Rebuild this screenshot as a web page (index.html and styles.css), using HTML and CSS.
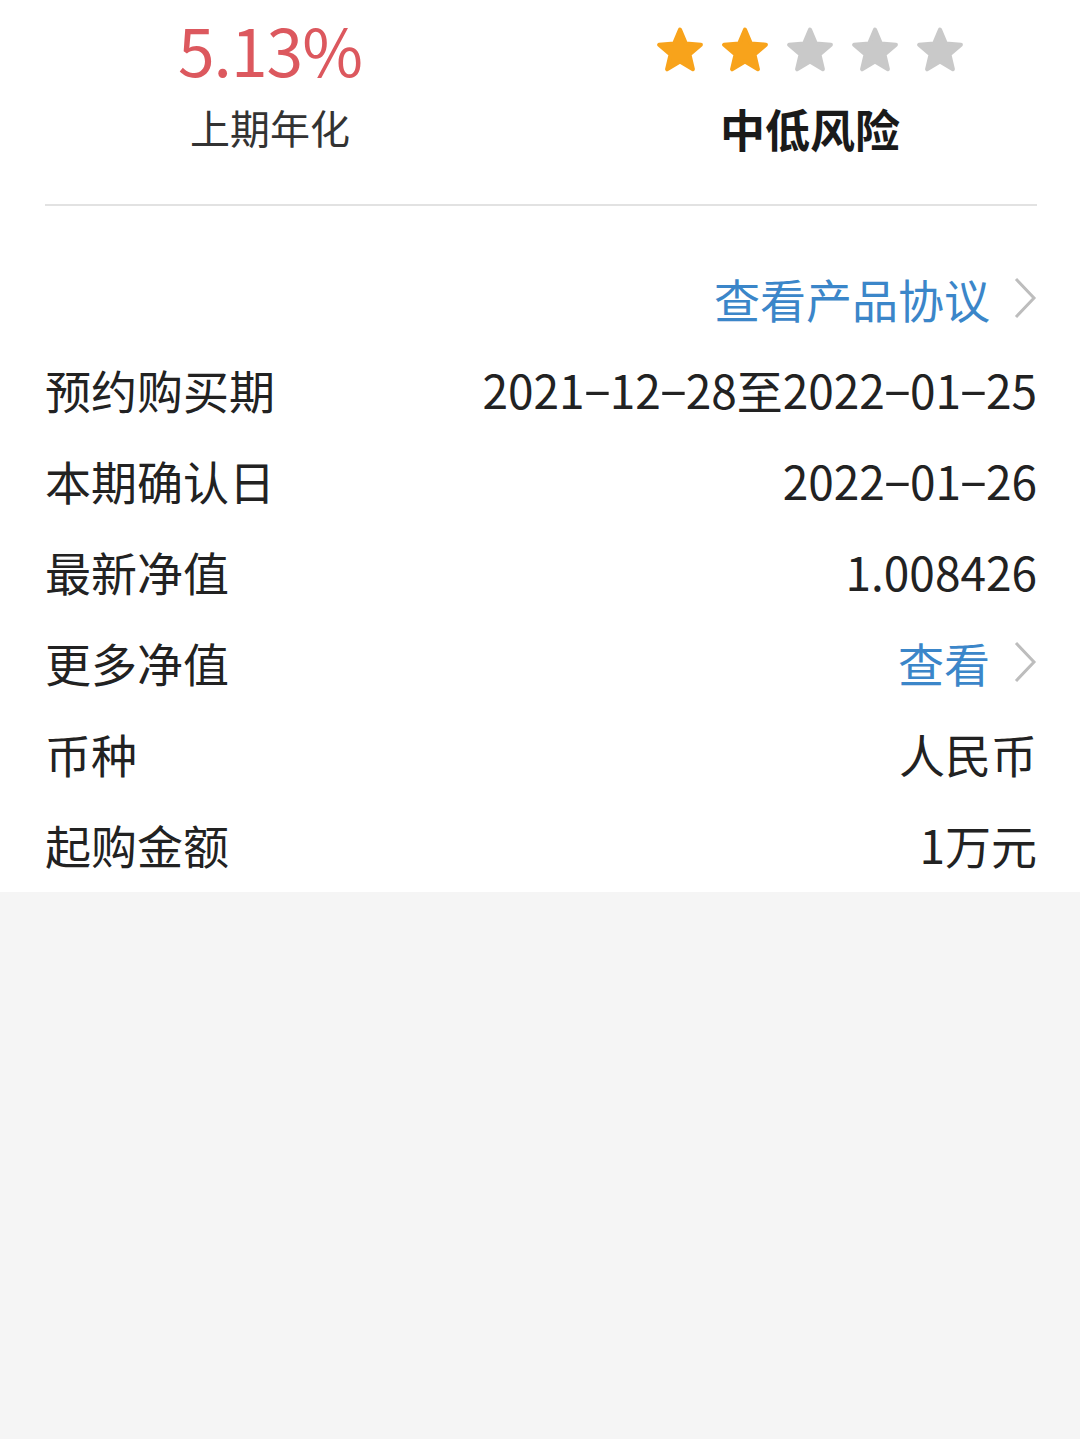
FILE: index.html
```html
<!DOCTYPE html>
<html lang="zh-CN">
<head>
  <meta charset="UTF-8" />
  <meta name="viewport" content="width=device-width, initial-scale=1.0"/>
  <title>产品详情</title>
  <link rel="stylesheet" href="styles.css">
</head>
<body>
  <div class="card">
    <div class="summary">
      <div class="summary-item rate">
        <div class="rate-value">5.13%</div>
        <div class="rate-label">上期年化</div>
      </div>
      <div class="summary-item risk">
        <div class="stars">
          <svg class="star on" viewBox="0 0 48 48"><polygon points="24,3.5 29.88,17.41 44.92,18.7 33.51,28.59 36.93,43.3 24,35.5 11.07,43.3 14.49,28.59 3.08,18.7 18.12,17.41"/></svg>
          <svg class="star on" viewBox="0 0 48 48"><polygon points="24,3.5 29.88,17.41 44.92,18.7 33.51,28.59 36.93,43.3 24,35.5 11.07,43.3 14.49,28.59 3.08,18.7 18.12,17.41"/></svg>
          <svg class="star" viewBox="0 0 48 48"><polygon points="24,3.5 29.88,17.41 44.92,18.7 33.51,28.59 36.93,43.3 24,35.5 11.07,43.3 14.49,28.59 3.08,18.7 18.12,17.41"/></svg>
          <svg class="star" viewBox="0 0 48 48"><polygon points="24,3.5 29.88,17.41 44.92,18.7 33.51,28.59 36.93,43.3 24,35.5 11.07,43.3 14.49,28.59 3.08,18.7 18.12,17.41"/></svg>
          <svg class="star" viewBox="0 0 48 48"><polygon points="24,3.5 29.88,17.41 44.92,18.7 33.51,28.59 36.93,43.3 24,35.5 11.07,43.3 14.49,28.59 3.08,18.7 18.12,17.41"/></svg>
        </div>
        <div class="risk-label">中低风险</div>
      </div>
    </div>

    <div class="details">
      <div class="divider"></div>

      <div class="row agreement">
        <a class="link" href="#">查看产品协议</a>
        <svg class="chevron" viewBox="0 0 24 42"><polyline points="3,2 21,21 3,40"/></svg>
      </div>

      <div class="row">
        <span class="row-label">预约购买期</span>
        <span class="row-value">2021<span class="dash">-</span>12<span class="dash">-</span>28至2022<span class="dash">-</span>01<span class="dash">-</span>25</span>
      </div>
      <div class="row">
        <span class="row-label">本期确认日</span>
        <span class="row-value">2022<span class="dash">-</span>01<span class="dash">-</span>26</span>
      </div>
      <div class="row">
        <span class="row-label">最新净值</span>
        <span class="row-value">1.008426</span>
      </div>
      <div class="row">
        <span class="row-label">更多净值</span>
        <span class="row-value">
          <a class="link" href="#">查看</a>
          <svg class="chevron" viewBox="0 0 24 42"><polyline points="3,2 21,21 3,40"/></svg>
        </span>
      </div>
      <div class="row">
        <span class="row-label">币种</span>
        <span class="row-value">人民币</span>
      </div>
      <div class="row">
        <span class="row-label">起购金额</span>
        <span class="row-value">1万元</span>
      </div>
    </div>
  </div>
</body>
</html>
```

FILE: styles.css
```css
* {
  margin: 0;
  padding: 0;
  box-sizing: border-box;
  font-family: "Noto Sans CJK SC", "Noto Sans", sans-serif;
}

body {
  min-height: 100vh;
  background: #f5f5f5;
  color: #222;
}

.card {
  background: #fff;
  padding-bottom: 3px;
}

.summary {
  display: flex;
  min-height: 204px;
}

.summary-item {
  flex: 1;
  display: flex;
  flex-direction: column;
  align-items: center;
}

.rate-value {
  font-size: 66px;
  line-height: 96px;
  color: #dc585e;
  letter-spacing: -1px;
}

.rate-label {
  margin-top: 7px;
  font-size: 40px;
  line-height: 48px;
  color: #333;
}

.risk {
  padding-top: 26px;
}

.stars {
  display: flex;
  gap: 17px;
}

.star {
  width: 48px;
  height: 48px;
  fill: #c9c9c9;
  stroke: #c9c9c9;
  stroke-width: 4;
  stroke-linejoin: round;
}

.star.on {
  fill: #f8a31b;
  stroke: #f8a31b;
}

.risk-label {
  margin-top: 29px;
  font-size: 45px;
  line-height: 52px;
  font-weight: 700;
  color: #1a1a1a;
}

.details {
  padding: 0 43px 0 45px;
}

.divider {
  height: 2px;
  background: #e2e2e2;
  margin-bottom: 46px;
}

.row {
  display: flex;
  justify-content: space-between;
  align-items: center;
  height: 91px;
  font-size: 46px;
}

.agreement {
  justify-content: flex-end;
}

.row-value {
  display: flex;
  align-items: center;
}

/* the app font draws a long dash between date parts */
.dash {
  display: inline-block;
  width: 25px;
  text-align: center;
  transform: translateY(-3px) scaleX(1.9);
}

.link {
  color: #3b86c9;
  text-decoration: none;
}

.chevron {
  width: 24px;
  height: 42px;
  margin-left: 23px;
  fill: none;
  stroke: #bdbdbd;
  stroke-width: 3;
}
```
